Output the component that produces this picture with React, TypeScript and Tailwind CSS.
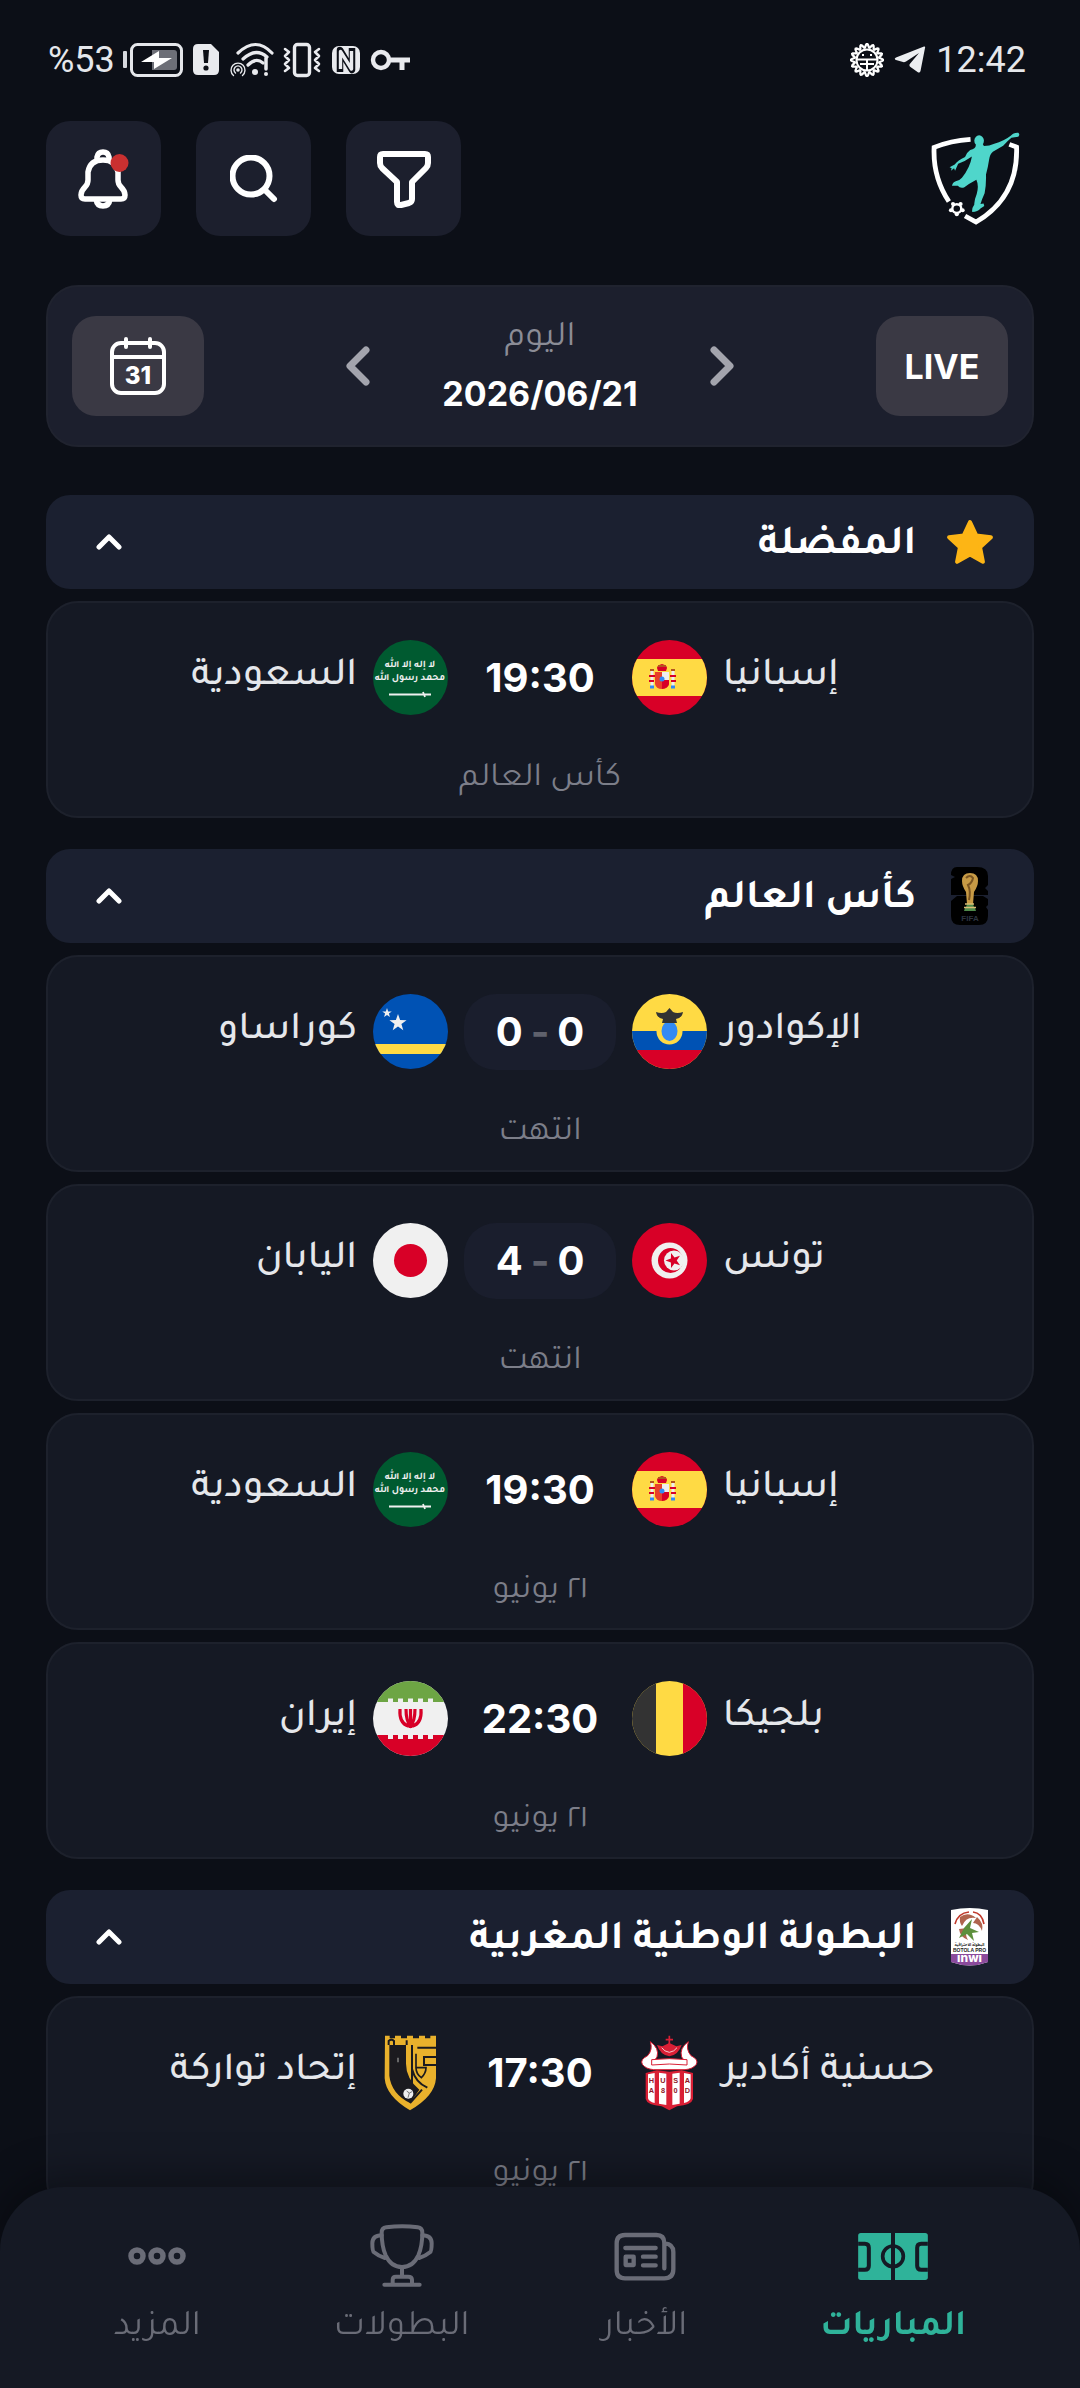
import React, { useState } from 'react';

type TeamKey = 'spain' | 'saudi' | 'ecuador' | 'curacao' | 'tunisia' | 'japan' | 'belgium' | 'iran' | 'agadir' | 'touarga';

interface Match {
  id: number;
  home: TeamKey;
  away: TeamKey;
  time?: string;
  score?: [number, number];
  note: string;
}

interface League {
  id: string;
  title: string;
  icon: React.ReactNode;
  matches: Match[];
}

const starPoints = (cx: number, cy: number, r: number, inner = 0.4, turn = -90) =>
  Array.from({ length: 10 }, (_, i) => {
    const rad = i % 2 === 0 ? r : r * inner;
    const a = ((turn + i * 36) * Math.PI) / 180;
    return `${(cx + rad * Math.cos(a)).toFixed(2)},${(cy + rad * Math.sin(a)).toFixed(2)}`;
  }).join(' ');

const gearPoints = Array.from({ length: 144 }, (_, i) => {
  const a = (i / 144) * Math.PI * 2;
  const r = 14.2 + 1.9 * Math.cos(a * 16);
  return `${(17 + r * Math.cos(a)).toFixed(2)},${(17 + r * Math.sin(a)).toFixed(2)}`;
}).join(' ');

/* ---------- Status bar ---------- */

const StatusBar: React.FC = () => (
  <div dir="ltr" className="flex h-11 items-center justify-between ps-12 pe-[54px] font-['Roboto',sans-serif] text-[36px] leading-none text-gray-200">
    <div className="flex items-center gap-2">
      <span>%53</span>
      <svg className="h-9 w-[61px]" viewBox="0 0 61 36" fill="none">
        <rect x="0" y="9" width="4" height="17" rx="1" fill="#d7d9de" />
        <rect x="8.500" y="2.500" width="50" height="31" rx="6" stroke="#e5e7eb" strokeWidth="3" />
        <path d="M29 8h22q3 0 3 3v14q0 3-3 3H29z" fill="#6d6f77" />
        <path d="M18 20L36 9v7h13L31 27v-7z" fill="#fff" />
      </svg>
      <svg className="h-9 w-[30px]" viewBox="0 0 30 36">
        <path d="M6 2h13l8 8v18q0 5-5 5H6q-5 0-5-5V7q0-5 5-5z" fill="#e9eaee" />
        <path d="M11 8h6l-1 13h-4z" fill="#0c0f17" />
        <circle cx="14" cy="26" r="2.600" fill="#0c0f17" />
      </svg>
      <svg className="h-9 w-11" viewBox="0 0 44 36" fill="none" stroke="#e9eaee" strokeLinecap="round">
        <path d="M8 11Q26-6 42 11" strokeWidth="3.200" />
        <path d="M13 17Q26 5 37 15" strokeWidth="3.200" />
        <path d="M18 23Q26 15 33 21" strokeWidth="3.200" />
        <circle cx="25" cy="30" r="3" fill="#e9eaee" stroke="none" />
        <path d="M36 16v11" strokeWidth="3.500" />
        <circle cx="36" cy="32" r="2" fill="#e9eaee" stroke="none" />
        <circle cx="8" cy="28" r="1.800" fill="#e9eaee" stroke="none" />
        <path d="M5.500 31a4 4 0 1 1 5 0M3.500 33.500a7 7 0 1 1 9 0" strokeWidth="1.400" />
      </svg>
      <svg className="h-9 w-10" viewBox="0 0 40 36" fill="none" stroke="#e9eaee" strokeLinecap="round" strokeLinejoin="round">
        <rect x="12.500" y="2.500" width="15" height="31" rx="3" strokeWidth="3.400" />
        <path d="M3 7l4 3-4 4 4 4-4 4 4 4-4 3M37 7l-4 3 4 4-4 4 4 4-4 4 4 3" strokeWidth="2.600" />
      </svg>
      <svg className="h-9 w-8" viewBox="2 0 32 36" fill="none">
        <rect x="4" y="4" width="28" height="28" rx="7" fill="#e9eaee" />
        <path d="M12 30V8l12 20V6" stroke="#0c0f17" strokeWidth="6.500" strokeLinejoin="round" />
        <path d="M12.500 27V9.500l11 17.500V9" stroke="#e9eaee" strokeWidth="3.400" strokeLinejoin="round" />
      </svg>
      <svg className="h-9 w-10" viewBox="0 0 40 36" fill="none" stroke="#e9eaee">
        <circle cx="11" cy="18" r="8" strokeWidth="4.400" />
        <path d="M19 18h21M32 18v10" strokeWidth="5" />
      </svg>
    </div>
    <div className="flex items-center gap-[10px]">
      <svg className="h-[34px] w-[34px]" viewBox="0 0 34 34" fill="none" stroke="#fff">
        <polygon points={gearPoints} strokeWidth="2.200" />
        <circle cx="17" cy="17" r="10.500" strokeWidth="2" />
        <path d="M6.500 16.500h21M10 21h14M17 17v10" strokeWidth="2" />
        <path d="M12 12h2M20 12h2" strokeWidth="2" />
      </svg>
      <svg className="h-8 w-8" viewBox="0 0 32 32" fill="#eceef1">
        <path d="M30 2.500q1.500-.5 1 1.500L26.500 27q-.8 2.500-3 1l-7-5q-2-1.600-.3-3.500L25 9 12 17.500q-1.500 1-3 .6L2 16q-2.500-1.200 0-2.600z" />
      </svg>
      <span>12:42</span>
    </div>
  </div>
);

/* ---------- Header ---------- */

const AppLogo: React.FC = () => (
  <svg className="h-[95px] w-[90px]" viewBox="1135 392 262 284" preserveAspectRatio="none" fill="none" role="img" aria-label="logo">
    <path d="M1253 417Q1195 421 1147 441Q1143 530 1190 603M1237 646L1269 664Q1392 590 1387 440L1366 432" stroke="#fff" strokeWidth="14" />
    <g fill="#4fd6cb">
      <ellipse cx="1278" cy="421" rx="14" ry="16" />
      <path d="M1268 434Q1270 444 1252 449Q1240 458 1237 470Q1216 480 1207 492L1192 500L1198 503L1196 511L1205 503L1208 511L1217 490Q1238 482 1257 468Q1252 500 1228 532Q1222 540 1210 542Q1200 546 1199 556L1216 556Q1222 564 1234 561Q1248 550 1270 538Q1278 556 1271 580Q1263 600 1264 612Q1256 624 1258 634Q1274 634 1282 624L1293 616L1291 609L1282 610Q1286 596 1294 578Q1299 552 1298 522Q1304 500 1307 478Q1309 462 1318 454L1348 436Q1362 420 1372 412L1392 409Q1398 402 1392 397Q1378 396 1370 406Q1350 422 1322 430Q1308 437 1292 437L1288 430Z" />
    </g>
    <circle cx="1213" cy="624" r="13" stroke="#fff" strokeWidth="7" />
    {[[1213, 641], [1196, 629], [1202, 610], [1224, 610], [1230, 629]].map(([x, y]) => (
      <circle key={`${x}-${y}`} cx={x} cy={y} r="6" fill="#fff" />
    ))}
  </svg>
);

const iconButton = 'flex h-[115px] w-[115px] items-center justify-center rounded-3xl bg-[#1c1f2d]';

const Header: React.FC = () => (
  <header className="flex items-center justify-between ps-[14px]">
    <AppLogo />
    <div className="flex gap-[35px]">
      <button className={iconButton} aria-label="تصفية">
        <svg className="h-[58px] w-[54px]" viewBox="0 0 54 58" fill="none" stroke="#fff" strokeWidth="6" strokeLinejoin="round">
          <path d="M6 4h42q3 0 3 3v6q0 3-2 5L35 32v17q0 3-3 4l-8 2q-4 1-4-3V32L5 18q-2-2-2-5V7q0-3 3-3z" />
        </svg>
      </button>
      <button className={iconButton} aria-label="بحث">
        <svg className="h-12 w-12" viewBox="0 0 48 48" fill="none" stroke="#fff" strokeWidth="6" strokeLinecap="round">
          <circle cx="21" cy="21" r="18.500" />
          <path d="M35 35l9 9" />
        </svg>
      </button>
      <button className={iconButton} aria-label="الإشعارات">
        <svg className="h-[60px] w-[54px]" viewBox="0 0 54 60" fill="none" stroke="#fff" strokeWidth="5.500" strokeLinejoin="round">
          <path d="M20 10V8q1-5 6-5t6 5v2M19 50q1 7 7 7t7-7" />
          <path d="M26 11q13 0 15 12v8q0 4 3 7 4 4 4 8 0 4-4 4H8q-4 0-4-4 0-4 4-8 3-3 3-7v-8q2-12 15-12z" />
          <circle cx="42.500" cy="14" r="9" fill="#c93030" stroke="none" />
        </svg>
      </button>
    </div>
  </header>
);

const Chevron: React.FC<{ flip?: boolean }> = ({ flip }) => (
  <svg className="h-10 w-6" viewBox="0 0 24 40" fill="none" stroke="#a3a4ad" strokeWidth="7" strokeLinecap="round" strokeLinejoin="round">
    <path d={flip ? 'M20 4L4 20l16 16' : 'M4 4l16 16L4 36'} />
  </svg>
);

const DateBar: React.FC = () => (
  <section className="flex h-[162px] items-center justify-between rounded-[32px] border-2 border-[#20232f] bg-[#1c1f2d] px-6">
    <button className="h-[100px] w-[132px] rounded-3xl bg-[#3a3944] font-['Inter',sans-serif] text-[34px] font-bold text-white">LIVE</button>
    <div className="flex w-[388px] items-center justify-between">
      <button aria-label="اليوم السابق">
        <Chevron />
      </button>
      <div className="flex flex-col items-center">
        <span className="text-[36px] leading-[56px] text-[#8b8c96]">اليوم</span>
        <span dir="ltr" className="font-['Inter',sans-serif] text-[34px] leading-[52px] font-bold text-white">2026/06/21</span>
      </div>
      <button aria-label="اليوم التالي">
        <Chevron flip />
      </button>
    </div>
    <button className="flex h-[100px] w-[132px] items-center justify-center rounded-3xl bg-[#3a3944]" aria-label="التقويم">
      <svg className="h-[60px] w-[58px]" viewBox="0 0 58 60" fill="none" stroke="#fff" strokeWidth="4" strokeLinecap="round">
        <rect x="3" y="7" width="52" height="50" rx="9" />
        <path d="M3 21h52M17 3v8M41 3v8" />
        <text x="29" y="48" textAnchor="middle" fontFamily="Inter, sans-serif" fontSize="24" fontWeight="800" fill="#fff" stroke="none">31</text>
      </svg>
    </button>
  </section>
);

/* ---------- Flags and crests ---------- */

const Flag: React.FC<{ children: React.ReactNode }> = ({ children }) => (
  <svg className="h-[75px] w-[75px] rounded-full" viewBox="0 0 75 75">{children}</svg>
);

const badges: Record<TeamKey, React.ReactNode> = {
  spain: (
    <Flag>
      <rect width="75" height="75" fill="#d80027" />
      <rect y="19" width="75" height="37" fill="#ffda44" />
      <path d="M25 28q0-3 5-4 5 1 5 4l-1 3h-8z" fill="#d80027" />
      <path d="M23 32h14v12q-1 5-7 5t-7-5z" fill="#e8402a" />
      <path d="M30 32h7v8h-7z" fill="#eee" />
      <path d="M30 40h7v4q-1 4-7 5z" fill="#d80027" />
      <circle cx="30" cy="39" r="2.500" fill="#338af3" />
      <path d="M20 30v16M41 30v16" stroke="#eee" strokeWidth="3" />
      <path d="M17 36h6M38 36h6M17 41h5M39 41h5" stroke="#d80027" strokeWidth="2" />
      <path d="M18 47h4M39 47h4" stroke="#338af3" strokeWidth="3" />
      <path d="M18 30h4M39 30h4M26 26h8" stroke="#b3541e" strokeWidth="2" />
    </Flag>
  ),
  saudi: (
    <Flag>
      <rect width="75" height="75" fill="#005a30" />
      <g fill="#f0f0f0" fontFamily="Tajawal, DejaVu Sans, sans-serif" fontSize="10" fontWeight="700" textAnchor="middle">
        <text x="37" y="27">لا إله إلا الله</text>
        <text x="37" y="40">محمد رسول الله</text>
      </g>
      <path d="M16 54.500h42M50 52l2 5" stroke="#f0f0f0" strokeWidth="1.800" fill="none" />
    </Flag>
  ),
  ecuador: (
    <Flag>
      <rect width="75" height="75" fill="#ffda44" />
      <rect y="37" width="75" height="20" fill="#0052b4" />
      <rect y="56" width="75" height="19" fill="#d80027" />
      <circle cx="37.500" cy="37.500" r="13" fill="#ffda44" />
      <ellipse cx="37.500" cy="37" rx="8" ry="10" fill="#338af3" />
      <path d="M24 18q6 2 10 0l3.500-4 3.500 4q4 2 10 0-1 6-7 7l1 4H30l1-4q-6-1-7-7z" fill="#333" />
    </Flag>
  ),
  curacao: (
    <Flag>
      <rect width="75" height="75" fill="#0052b4" />
      <rect y="50" width="75" height="10" fill="#ffda44" />
      <polygon points={starPoints(25, 29, 9)} fill="#f0f0f0" />
      <polygon points={starPoints(14, 19, 5)} fill="#f0f0f0" />
    </Flag>
  ),
  tunisia: (
    <Flag>
      <rect width="75" height="75" fill="#d80027" />
      <circle cx="37.500" cy="37.500" r="18" fill="#f0f0f0" />
      <circle cx="38.500" cy="37.500" r="12.500" fill="#d80027" />
      <circle cx="42" cy="37.500" r="10" fill="#f0f0f0" />
      <polygon points={starPoints(41.5, 37.5, 8, 0.4, 180)} fill="#d80027" />
    </Flag>
  ),
  japan: (
    <Flag>
      <rect width="75" height="75" fill="#f0f0f0" />
      <circle cx="37.500" cy="37.500" r="16.500" fill="#d80027" />
    </Flag>
  ),
  belgium: (
    <Flag>
      <rect width="75" height="75" fill="#ffda44" />
      <rect width="24" height="75" fill="#333" />
      <rect x="51" width="24" height="75" fill="#d80027" />
    </Flag>
  ),
  iran: (
    <Flag>
      <rect width="75" height="75" fill="#f0f0f0" />
      <rect width="75" height="21" fill="#6da544" />
      <rect y="54" width="75" height="21" fill="#d80027" />
      <path d="M15 20h47M15 55.500h47" stroke="#f0f0f0" strokeWidth="5" strokeDasharray="5 5" />
      <path d="M27 28q-1 14 8 17h5q9-3 8-17M33 28q0 12 4.500 17 4.500-5 4.500-17M37.500 28v19" stroke="#d80027" strokeWidth="3.200" fill="none" />
    </Flag>
  ),
  agadir: (
    <svg className="h-[77px] w-[75px]" viewBox="877 101 225 231">
      <path d="M932 124q8 24-8 42-24 12-16 26 10 14 34 16h94q24-2 34-16 8-14-16-26-16-18-8-42-28 20-20 46l6 8h-86l6-8q8-26-20-46z" fill="#fff" stroke="#d91f35" strokeWidth="3" />
      <path d="M989 106v56M978 118h22" stroke="#d91f35" strokeWidth="5" />
      <path d="M952 134q10 30 37 34 27-4 37-34l-16 4-21-10-21 10z" fill="#d91f35" />
      <path d="M966 142q8 12 23 14 15-2 23-14" fill="none" stroke="#f4c8cc" strokeWidth="3" />
      <path d="M936 178q53-6 106 0v16q-53-6-106 0z" fill="#fff" stroke="#d91f35" strokeWidth="3" />
      <path d="M918 218l34-8 37 4 37-4 34 8v78q-4 18-48 22l-23 12-23-12q-44-4-48-22z" fill="#d91f35" />
      <path d="M925 222l20-4v90q-18-4-20-14zM958 217l22 3v94l-22-4zM998 220l22-3v93l-22 4zM1033 218l20 4v72q-2 10-20 14z" fill="#fff" />
      <g fill="#8f1626" fontFamily="Liberation Sans, sans-serif" fontSize="22" fontWeight="700" textAnchor="middle">
        <text y="249"><tspan x="935">H</tspan><tspan x="970">U</tspan><tspan x="1008">S</tspan><tspan x="1043">A</tspan></text>
        <text y="278"><tspan x="935">A</tspan><tspan x="970">8</tspan><tspan x="1008">0</tspan><tspan x="1043">D</tspan></text>
      </g>
    </svg>
  ),
  touarga: (
    <svg className="h-[77px] w-[75px]" viewBox="99 101 225 231" fill="none">
      <path d="M135 106h14v8h16v-8h18v8h18v-8h18v8h18v-8h18v8h16v-8h17v128q-4 54-78 96-72-42-76-96z" fill="#e9b12c" />
      <path d="M148 134h50v56q0 44 40 78l-28 40q-56-28-62-82z" fill="#1b1a1f" />
      <path d="M146 134v-12q8-8 16 0v12M200 134v-14M216 134v130M232 142h56M288 170h-36v24h36M216 206q10 40 46 56M246 268l-36 40" stroke="#1b1a1f" strokeWidth="6" />
      <path d="M228 160v42h30q0 16-14 30-16-12-16-30" stroke="#1b1a1f" strokeWidth="5" />
      <circle cx="205" cy="280" r="15" fill="#eee" />
      <path d="M200 272l8 6 8-4M204 292l4-14" stroke="#777" strokeWidth="3" />
      <path d="M174 172v14" stroke="#777" strokeWidth="5" />
    </svg>
  ),
};

const names: Record<TeamKey, string> = {
  spain: 'إسبانيا',
  saudi: 'السعودية',
  ecuador: 'الإكوادور',
  curacao: 'كوراساو',
  tunisia: 'تونس',
  japan: 'اليابان',
  belgium: 'بلجيكا',
  iran: 'إيران',
  agadir: 'حسنية أكادير',
  touarga: 'إتحاد تواركة',
};

const StarIcon: React.FC = () => (
  <svg className="h-12 w-12" viewBox="0 0 48 48" fill="#fdb515" stroke="#fdb515" strokeWidth="4" strokeLinejoin="round">
    <polygon points={starPoints(24, 26, 22, 0.48)} />
  </svg>
);

const WorldCupIcon: React.FC = () => (
  <svg className="h-[58px] w-12" viewBox="0 0 48 58">
    <path d="M11 0h20q11 0 11 9v9l-3 3 3 3v4H5V12l4-2-4-2q0-8 6-8z" fill="#000" />
    <path d="M11 29h26l5 3v6l-2 2 2 3v6q0 9-9 9H14q-9 0-9-9V34z" fill="#000" />
    <path d="M24 6q8 0 8 8 0 5-4 11l-1 12h-6l-1-12q-4-6-4-11 0-8 8-8z" fill="#c79a45" />
    <path d="M20 11q4-4 7 0-1 5-5 7 3 6 1 15" stroke="#7a5420" strokeWidth="2" fill="none" />
    <path d="M21 37h6l1 3h-8zM19 41h10l1 3H18z" fill="#4f8a4b" />
    <path d="M18 40.500h12M19 37h9" stroke="#d8bd74" strokeWidth="1.500" />
    <text x="24" y="54" textAnchor="middle" fontFamily="Liberation Sans, sans-serif" fontSize="8" fontWeight="700" fill="#2e3540">FIFA</text>
  </svg>
);

const BotolaIcon: React.FC = () => (
  <svg className="h-[58px] w-12" viewBox="0 0 48 58" fill="none">
    <path d="M5 2q19-4 37 0v52q-18 7-37 0z" fill="#fff" />
    <path d="M5 46h37v8q-18 7-37 0z" fill="#8b4a9c" />
    <path d="M9 16q3-11 14-12M27 4q9 1 11 12" stroke="#c0392b" strokeWidth="1.600" />
    <path d="M14 9q8-6 16 1-10-2-14 8-3-4-2-9zM31 9q7 6 5 14-3-8-9-8zM13 21q1 8 9 11-4-6 0-12z" fill="#b0644e" />
    <path d="M18 20l8-9-2 9 9 4-7 1 2 8-7-7-8 4z" fill="#5d8f3c" />
    <text x="23.500" y="38" textAnchor="middle" fontFamily="Noto Sans Arabic, DejaVu Sans, sans-serif" fontSize="4" fontWeight="700" fill="#222">البطولة الاحترافية</text>
    <text x="23.500" y="44" textAnchor="middle" fontFamily="Liberation Sans, sans-serif" fontSize="5" fontWeight="700" fill="#222">BOTOLA PRO</text>
    <text x="23.500" y="54" textAnchor="middle" fontFamily="Inter, sans-serif" fontSize="12" fontWeight="800" fill="#fff">inwi</text>
  </svg>
);

/* ---------- Matches ---------- */

const leagues: League[] = [
  {
    id: 'favorites',
    title: 'المفضلة',
    icon: <StarIcon />,
    matches: [{ id: 1, home: 'spain', away: 'saudi', time: '19:30', note: 'كأس العالم' }],
  },
  {
    id: 'world-cup',
    title: 'كأس العالم',
    icon: <WorldCupIcon />,
    matches: [
      { id: 2, home: 'ecuador', away: 'curacao', score: [0, 0], note: 'انتهت' },
      { id: 3, home: 'tunisia', away: 'japan', score: [0, 4], note: 'انتهت' },
      { id: 4, home: 'spain', away: 'saudi', time: '19:30', note: '٢١ يونيو' },
      { id: 5, home: 'belgium', away: 'iran', time: '22:30', note: '٢١ يونيو' },
    ],
  },
  {
    id: 'botola',
    title: 'البطولة الوطنية المغربية',
    icon: <BotolaIcon />,
    matches: [{ id: 6, home: 'agadir', away: 'touarga', time: '17:30', note: '٢١ يونيو' }],
  },
];

const MatchCard: React.FC<{ match: Match }> = ({ match }) => (
  <li className="rounded-[32px] border-2 border-[#1d212c] bg-[#151924] px-6 pt-9 pb-2">
    <div className="grid grid-cols-[1fr_auto_1fr] items-center gap-4">
      <span className="text-end text-[40px] leading-[60px] font-medium text-gray-200">{names[match.home]}</span>
      <div className="flex h-[77px] items-center gap-4">
        {badges[match.home]}
        {match.score ? (
          <div className="flex h-[76px] w-[152px] items-center justify-center gap-2 rounded-[32px] bg-[#1a1e2d] font-['Inter',sans-serif] text-[40px] font-bold text-white">
            <span>{match.score[0]}</span>
            <span className="text-[#5f616c]">-</span>
            <span>{match.score[1]}</span>
          </div>
        ) : (
          <div className="w-[152px] text-center font-['Inter',sans-serif] text-[40px] font-bold text-white">{match.time}</div>
        )}
        {badges[match.away]}
      </div>
      <span className="text-[40px] leading-[60px] font-medium text-gray-200">{names[match.away]}</span>
    </div>
    <p className="mt-9 text-center text-[34px] leading-[56px] text-[#7c7e89]">{match.note}</p>
  </li>
);

const LeagueSection: React.FC<{ league: League }> = ({ league }) => {
  const [open, setOpen] = useState(true);

  return (
    <section>
      <button
        onClick={() => setOpen(!open)}
        aria-expanded={open}
        className="flex h-[94px] w-full items-center rounded-3xl bg-[#1b2030] ps-10 pe-[50px]"
      >
        {league.icon}
        <h2 className="ms-[30px] flex-1 pt-3 text-start text-[41px] leading-[60px] font-bold text-white">{league.title}</h2>
        <svg className="h-4 w-[26px]" viewBox="0 0 26 16" fill="none" stroke="#fff" strokeWidth="5" strokeLinecap="round" strokeLinejoin="round">
          <path d={open ? 'M3 13L13 3l10 10' : 'M3 3l10 10L23 3'} />
        </svg>
      </button>
      {open && (
        <ul className="mt-3 space-y-3">
          {league.matches.map((match) => (
            <MatchCard key={match.id} match={match} />
          ))}
        </ul>
      )}
    </section>
  );
};

/* ---------- Bottom navigation ---------- */

const navItems = [
  {
    label: 'المباريات',
    active: true,
    icon: (
      <svg className="h-[47px] w-[70px]" viewBox="896 96 209 141" fill="none">
        <rect x="896" y="96" width="209" height="141" rx="8" fill="currentColor" />
        <path d="M1000.500 96v141M896 128h20q12 0 12 12v54q0 12-12 12h-20M1105 128h-20q-12 0-12 12v54q0 12 12 12h20" stroke="#151924" strokeWidth="12" />
        <circle cx="1000.500" cy="166" r="31" stroke="#151924" strokeWidth="11" />
      </svg>
    ),
  },
  {
    label: 'الأخبار',
    icon: (
      <svg className="h-[49px] w-[62px]" viewBox="161 86 186 147" fill="none" stroke="currentColor" strokeWidth="13" strokeLinecap="round">
        <path d="M312 195v-76q0-24-24-24h-94q-25 0-25 25v80q0 25 25 25h118q27 0 27-27v-52q0-24-26-26" />
        <path d="M195 134h91M248 160h38M248 186h38M196 160h24v25h-24z" strokeLinejoin="round" />
      </svg>
    ),
  },
  {
    label: 'البطولات',
    icon: (
      <svg className="h-16 w-16" viewBox="869 72 192 192" fill="none" stroke="currentColor" strokeWidth="12" strokeLinecap="round" strokeLinejoin="round">
        <path d="M918 82q48-6 94 0 14 2 14 16 0 40-12 68-16 35-49 35t-49-35q-12-28-12-68 0-14 14-16z" />
        <path d="M904 106q-28 0-28 24 0 24 4 26 14 12 34 18M1026 106q28 0 28 24 0 24-4 26-14 12-34 18M965 202v28M937 250v-10q0-10 10-10h36q12 0 12 10v10M912 254h106" />
      </svg>
    ),
  },
  {
    label: 'المزيد',
    icon: (
      <svg className="h-[18px] w-[58px]" viewBox="0 0 58 18" fill="none" stroke="currentColor" strokeWidth="5.500">
        <circle cx="9" cy="9" r="6" />
        <circle cx="29" cy="9" r="6" />
        <circle cx="49" cy="9" r="6" />
      </svg>
    ),
  },
];

const BottomNav: React.FC = () => (
  <nav className="fixed inset-x-0 bottom-0 flex justify-between rounded-t-[64px] bg-[#151924] px-[114px] pt-[37px] pb-7 shadow-[0_-10px_40px_rgba(0,0,0,0.35)]">
    {navItems.map((item) => (
      <a
        key={item.label}
        href="#"
        className={`flex flex-col items-center ${item.active ? 'font-bold text-[#2fb39a]' : 'text-[#6a6c77]'}`}
      >
        <span className="flex h-16 items-center">{item.icon}</span>
        <span className="mt-[10px] text-[36px] leading-[62px]">{item.label}</span>
      </a>
    ))}
  </nav>
);

export default function App() {
  return (
    <div dir="rtl" lang="ar" className="h-screen overflow-hidden bg-[#0c0f17] pt-[38px] font-['Tajawal','Cairo','Noto_Sans','DejaVu_Sans',sans-serif]">
      <StatusBar />
      <main className="px-[46px] pt-[39px]">
        <Header />
        <div className="mt-[49px]">
          <DateBar />
        </div>
        <div className="mt-12 space-y-[31px]">
          {leagues.map((league) => (
            <LeagueSection key={league.id} league={league} />
          ))}
        </div>
      </main>
      <BottomNav />
    </div>
  );
}
